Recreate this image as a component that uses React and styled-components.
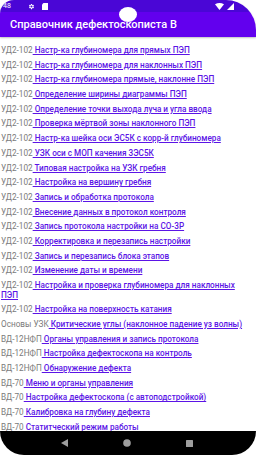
import React from "react";
import styled, { createGlobalStyle } from "styled-components";

const Global = createGlobalStyle`
  html, body { margin: 0; padding: 0; background: #ffffff; }
  body { font-family: Roboto, "Noto Sans", Arial, sans-serif; }
  * { box-sizing: border-box; }
`;

const Screen = styled.div`
  position: relative;
  width: 256px;
  height: 455px;
  display: flex;
  flex-direction: column;
  background: #ffffff;
`;

const Header = styled.div`
  flex: none;
  display: flex;
  flex-direction: column;
  border-radius: 14px 30px 0 0;
  overflow: hidden;
  box-shadow: 0 1px 2px rgba(0, 0, 0, 0.25);
  position: relative;
  z-index: 1;
`;

const StatusBar = styled.div`
  height: 12px;
  background: #4a06d6;
  display: flex;
  align-items: center;
  padding: 0 0 0 3px;
  color: #fff;
  font-size: 7px;
`;

const StatusLeft = styled.div`
  display: flex;
  align-items: center;
  gap: 7px;
  flex: 1;
`;

const StatusRight = styled.div`
  display: flex;
  align-items: center;
  gap: 3px;
  padding-right: 22px;
`;

const Time = styled.span`
  font-size: 7px;
  line-height: 7px;
  margin-right: 10px;
`;

const AppBar = styled.div`
  height: 25px;
  background: #6200ee;
  display: flex;
  align-items: center;
  padding-left: 10px;
  color: #fff;
  font-size: 11px;
  font-weight: 500;
`;

const Camera = styled.span`
  position: absolute;
  display: block;
  left: 119px;
  top: 7px;
  width: 18px;
  height: 15px;
  border-radius: 50%;
  background: #ffffff;
  z-index: 10;
`;

const Content = styled.div`
  flex: 1;
  overflow: hidden;
  padding: 9px 10px 0 1px;
`;

const Item = styled.div`
  font-size: 8.2px;
  line-height: 9.6px;
  margin-bottom: 5.1px;
  color: #7a7a7a;
`;

const Link = styled.span`
  color: #5b14e6;
  text-decoration: underline;
  font-weight: 500;
`;

const NavBar = styled.div`
  height: 24px;
  flex: none;
  background: #000;
  border-radius: 0 0 24px 24px;
  display: flex;
  align-items: center;
  justify-content: space-around;
  padding: 0 36px 0 34px;
`;

const items = [
  ["УД2-102", "Настр-ка глубиномера для прямых ПЭП"],
  ["УД2-102", "Настр-ка глубиномера для наклонных ПЭП"],
  ["УД2-102", "Настр-ка глубиномера прямые, наклонне ПЭП"],
  ["УД2-102", "Определение ширины диаграммы ПЭП"],
  ["УД2-102", "Определение точки выхода луча и угла ввода"],
  ["УД2-102", "Проверка мёртвой зоны наклонного ПЭП"],
  ["УД2-102", "Настр-ка шейка оси ЭС5К с корр-й глубиномера"],
  ["УД2-102", "УЗК оси с МОП качения 3ЭС5К"],
  ["УД2-102", "Типовая настройка на УЗК гребня"],
  ["УД2-102", "Настройка на вершину гребня"],
  ["УД2-102", "Запись и обработка протокола"],
  ["УД2-102", "Внесение данных в протокол контроля"],
  ["УД2-102", "Запись протокола настройки на СО-3Р"],
  ["УД2-102", "Корректировка и перезапись настройки"],
  ["УД2-102", "Запись и перезапись блока этапов"],
  ["УД2-102", "Изменение даты и времени"],
  ["УД2-102", "Настройка и проверка глубиномера для наклонных ПЭП"],
  ["УД2-102", "Настройка на поверхность катания"],
  ["Основы УЗК", "Критические углы (наклонное падение уз волны)"],
  ["ВД-12НФП", "Органы управления и запись протокола"],
  ["ВД-12НФП", "Настройка дефектоскопа на контроль"],
  ["ВД-12НФП", "Обнаружение дефекта"],
  ["ВД-70", "Меню и органы управления"],
  ["ВД-70", "Настройка дефектоскопа (с автоподстройкой)"],
  ["ВД-70", "Калибровка на глубину дефекта"],
  ["ВД-70", "Статитческий режим работы"],
];

const Gear = () => (
  <svg width="7" height="7" viewBox="0 0 24 24" fill="#fff">
    <path d="M19.4 13a7.5 7.5 0 0 0 0-2l2.1-1.6-2-3.5-2.5 1a7 7 0 0 0-1.7-1L15 3h-4l-.4 2.9a7 7 0 0 0-1.7 1l-2.5-1-2 3.5L6.6 11a7.5 7.5 0 0 0 0 2l-2.1 1.6 2 3.5 2.5-1a7 7 0 0 0 1.7 1L11 21h4l.4-2.9a7 7 0 0 0 1.7-1l2.5 1 2-3.5zM13 15.5a3.5 3.5 0 1 1 0-7 3.5 3.5 0 0 1 0 7z" transform="translate(-1 0)" />
  </svg>
);

const Sim = () => (
  <svg width="6" height="7" viewBox="0 0 6 7" fill="#fff">
    <path d="M0 1.5 1.5 0H6v7H0z" />
  </svg>
);

const Wifi = () => (
  <svg width="9" height="7" viewBox="0 0 9 7" fill="#fff">
    <path d="M0 1.2Q4.5-1.2 9 1.2L4.5 7z" />
  </svg>
);

const Signal = () => (
  <svg width="7" height="7" viewBox="0 0 7 7" fill="#fff">
    <path d="M7 0v7H0z" />
  </svg>
);

const Back = () => (
  <svg width="7" height="8" viewBox="0 0 7 8" fill="#9e9e9e">
    <path d="M7 0v8L0 4z" />
  </svg>
);

const Home = () => (
  <svg width="8" height="8" viewBox="0 0 8 8" fill="#9e9e9e">
    <circle cx="4" cy="4" r="3.8" />
  </svg>
);

const Recent = () => (
  <svg width="7" height="7" viewBox="0 0 7 7" fill="#9e9e9e">
    <rect width="7" height="7" rx="0.5" />
  </svg>
);

export default function App() {
  return (
    <>
      <Global />
      <Screen>
        <Header>
          <StatusBar>
            <StatusLeft>
              <Time>48</Time>
              <Gear />
              <Sim />
            </StatusLeft>
            <StatusRight>
              <Wifi />
              <Signal />
            </StatusRight>
          </StatusBar>
          <AppBar>Справочник дефектоскописта В</AppBar>
        </Header>
        <Content>
          {items.map(([p, t], i) => (
            <Item key={i}>
              {p}
              <Link>{" " + t}</Link>
            </Item>
          ))}
        </Content>
        <NavBar>
          <Back />
          <Home />
          <Recent />
        </NavBar>
        <Camera />
      </Screen>
    </>
  );
}
